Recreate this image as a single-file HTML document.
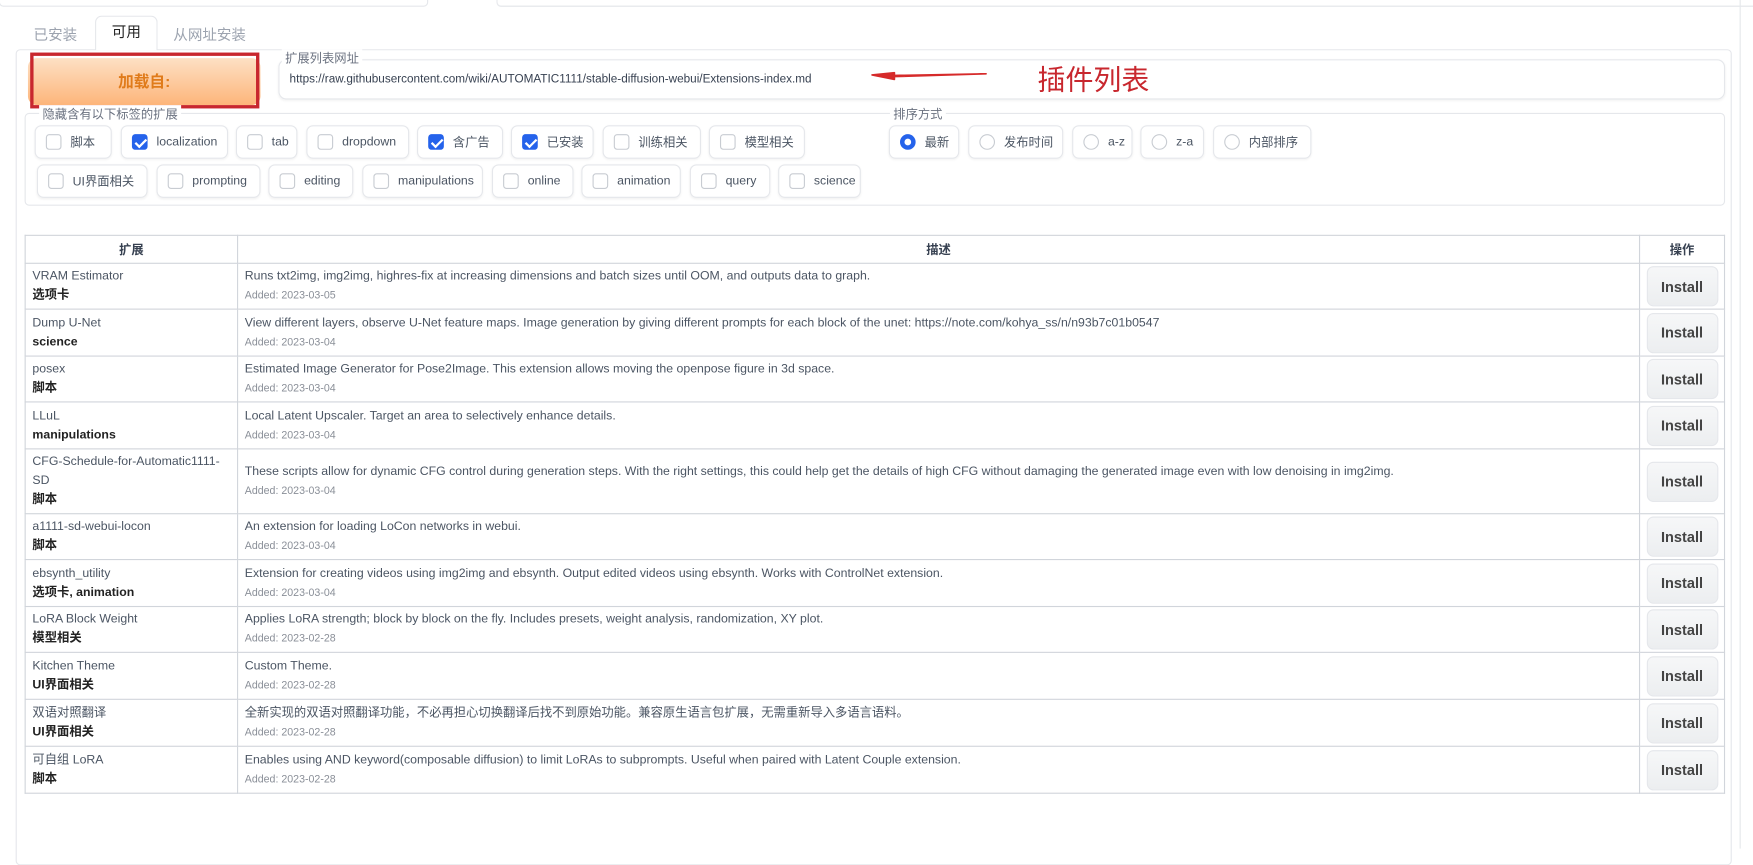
<!DOCTYPE html>
<html><head><meta charset="utf-8"><style>
*{box-sizing:border-box;margin:0;padding:0}
html,body{width:1753px;height:759px;overflow:hidden;background:#fff}
body{font-family:"Liberation Sans","Noto Sans CJK SC",sans-serif;color:#374151}
#w{position:absolute;left:0;top:0;width:1568px;height:679px;transform:scale(1.118);transform-origin:0 0}
.a{position:absolute}
.chip{position:absolute;height:30px;border:1px solid #e5e7eb;border-radius:6px;background:#fff;box-shadow:0 1px 2px rgba(0,0,0,.05);font-size:11px;color:#4b5563;display:flex;align-items:center;padding-left:9px;white-space:nowrap}
.cb{width:14px;height:14px;border:1px solid #c8ccd2;border-radius:3px;margin-right:8px;background:#fff;flex:none}
.cb.on{background:#2563eb;border-color:#2563eb;position:relative}
.cb.on:after{content:"";position:absolute;left:4px;top:1px;width:4px;height:8px;border:solid #fff;border-width:0 2px 2px 0;transform:rotate(45deg)}
.rd{width:14px;height:14px;border:1px solid #c8ccd2;border-radius:50%;margin-right:8px;flex:none}
.rd.on{border:4px solid #2563eb}
table{position:absolute;left:22px;top:210px;width:1521px;border-collapse:collapse;font-size:11px}
td,th{border:1px solid #d1d5db;vertical-align:middle}
th{height:25px;font-weight:bold;font-size:11px;color:#374151}
td{padding:2px 6px;color:#4b5563;line-height:17px}
td b{color:#222;font-weight:bold}
.d{font-size:9.5px;color:#8a8f98}
.btn{width:64px;height:36px;margin:0 auto;border:1px solid #e5e7eb;border-radius:6px;background:linear-gradient(#f6f7f8,#eceef0);font-size:13px;font-weight:bold;color:#444;display:flex;align-items:center;justify-content:center}
td.o{padding:0}
</style></head><body><div id="w">
<div class="a" style="left:-1px;top:-10px;width:384px;height:16px;border:1px solid #e5e7eb;border-radius:4px"></div>
<div class="a" style="left:444px;top:-10px;width:1320px;height:16px;border:1px solid #e5e7eb;border-radius:4px"></div>
<div class="a" style="left:30px;top:21px;font-size:13px;color:#9ca3af">已安装</div>
<div class="a" style="left:85px;top:14px;width:56px;height:31px;border:1px solid #e5e7eb;border-bottom:none;border-radius:6px 6px 0 0;background:#fff;z-index:2;font-size:13px;color:#222;text-align:center;line-height:28px">可用</div>
<div class="a" style="left:155px;top:21px;font-size:13px;color:#9ca3af">从网址安装</div>
<div class="a" style="left:14px;top:44px;width:1535px;height:730px;border:1px solid #e5e7eb;border-radius:4px"></div>
<div class="a" style="left:1556px;top:0;width:1px;height:759px;background:#e5e7eb"></div>
<div class="a" style="left:25px;top:52px;width:208px;height:42px;border-radius:8px;background:linear-gradient(#fde0c4,#fdb57a);font-size:14px;font-weight:bold;color:#e07b1a;text-align:center;line-height:42px">加载自:</div>
<div class="a" style="left:27px;top:47px;width:205px;height:50px;border:3px solid #c8272e"></div>
<div class="a" style="left:249px;top:53px;width:1294px;height:36px;border:1px solid #e5e7eb;border-radius:7px;box-shadow:0 1px 2px rgba(0,0,0,.05);font-size:10.5px;color:#374151;padding:11px 9px">https://raw.githubusercontent.com/wiki/AUTOMATIC1111/stable-diffusion-webui/Extensions-index.md</div>
<div class="a" style="left:252px;top:44px;background:#fff;padding:0 3px;font-size:11px;color:#6b7280">扩展列表网址</div>
<svg class="a" style="left:778px;top:58px" width="106" height="18"><path d="M104 8 L22 9.5 L22 7 L2 9 L22 13 L22 10.5 Z" fill="#d62a2a" stroke="#d62a2a" stroke-width="1.5" stroke-linejoin="round"/></svg>
<div class="a" style="left:928px;top:52px;font-size:25px;color:#c8272e;font-family:'Noto Sans CJK SC',sans-serif">插件列表</div>
<div class="a" style="left:22px;top:101px;width:1521px;height:83px;border:1px solid #e5e7eb;border-radius:4px"></div>
<div class="a" style="left:35px;top:94px;background:#fff;padding:0 3px;font-size:11px;color:#6b7280">隐藏含有以下标签的扩展</div>
<div class="a" style="left:796px;top:94px;background:#fff;padding:0 3px;font-size:11px;color:#6b7280">排序方式</div>
<div class="chip" style="left:31px;top:112px;width:69px"><span class="cb"></span>脚本</div>
<div class="chip" style="left:108px;top:112px;width:96px"><span class="cb on"></span>localization</div>
<div class="chip" style="left:211px;top:112px;width:55px"><span class="cb"></span>tab</div>
<div class="chip" style="left:274px;top:112px;width:92px"><span class="cb"></span>dropdown</div>
<div class="chip" style="left:373px;top:112px;width:77px"><span class="cb on"></span>含广告</div>
<div class="chip" style="left:457px;top:112px;width:74px"><span class="cb on"></span>已安装</div>
<div class="chip" style="left:539px;top:112px;width:88px"><span class="cb"></span>训练相关</div>
<div class="chip" style="left:634px;top:112px;width:86px"><span class="cb"></span>模型相关</div>
<div class="chip" style="left:33px;top:147px;width:99px"><span class="cb"></span>UI界面相关</div>
<div class="chip" style="left:140px;top:147px;width:93px"><span class="cb"></span>prompting</div>
<div class="chip" style="left:240px;top:147px;width:76px"><span class="cb"></span>editing</div>
<div class="chip" style="left:324px;top:147px;width:108px"><span class="cb"></span>manipulations</div>
<div class="chip" style="left:440px;top:147px;width:73px"><span class="cb"></span>online</div>
<div class="chip" style="left:520px;top:147px;width:89px"><span class="cb"></span>animation</div>
<div class="chip" style="left:617px;top:147px;width:72px"><span class="cb"></span>query</div>
<div class="chip" style="left:696px;top:147px;width:74px"><span class="cb"></span>science</div>
<div class="chip" style="left:795px;top:112px;width:63px"><span class="rd on"></span>最新</div>
<div class="chip" style="left:866px;top:112px;width:85px"><span class="rd"></span>发布时间</div>
<div class="chip" style="left:959px;top:112px;width:54px"><span class="rd"></span>a-z</div>
<div class="chip" style="left:1020px;top:112px;width:57px"><span class="rd"></span>z-a</div>
<div class="chip" style="left:1085px;top:112px;width:88px"><span class="rd"></span>内部排序</div>
<table>
<colgroup><col style="width:190px"><col style="width:1255px"><col style="width:76px"></colgroup>
<tr><th>扩展</th><th>描述</th><th>操作</th></tr>
<tr style="height:41px"><td>VRAM Estimator<br><b>选项卡</b></td><td>Runs txt2img, img2img, highres-fix at increasing dimensions and batch sizes until OOM, and outputs data to graph.<br><span class="d">Added: 2023-03-05</span></td><td class="o"><div class="btn">Install</div></td></tr>
<tr style="height:42px"><td>Dump U-Net<br><b>science</b></td><td>View different layers, observe U-Net feature maps. Image generation by giving different prompts for each block of the unet: https://note.com/kohya_ss/n/n93b7c01b0547<br><span class="d">Added: 2023-03-04</span></td><td class="o"><div class="btn">Install</div></td></tr>
<tr style="height:41px"><td>posex<br><b>脚本</b></td><td>Estimated Image Generator for Pose2Image. This extension allows moving the openpose figure in 3d space.<br><span class="d">Added: 2023-03-04</span></td><td class="o"><div class="btn">Install</div></td></tr>
<tr style="height:42px"><td>LLuL<br><b>manipulations</b></td><td>Local Latent Upscaler. Target an area to selectively enhance details.<br><span class="d">Added: 2023-03-04</span></td><td class="o"><div class="btn">Install</div></td></tr>
<tr style="height:58px"><td>CFG-Schedule-for-Automatic1111-SD<br><b>脚本</b></td><td>These scripts allow for dynamic CFG control during generation steps. With the right settings, this could help get the details of high CFG without damaging the generated image even with low denoising in img2img.<br><span class="d">Added: 2023-03-04</span></td><td class="o"><div class="btn">Install</div></td></tr>
<tr style="height:41px"><td>a1111-sd-webui-locon<br><b>脚本</b></td><td>An extension for loading LoCon networks in webui.<br><span class="d">Added: 2023-03-04</span></td><td class="o"><div class="btn">Install</div></td></tr>
<tr style="height:42px"><td>ebsynth_utility<br><b>选项卡, animation</b></td><td>Extension for creating videos using img2img and ebsynth. Output edited videos using ebsynth. Works with ControlNet extension.<br><span class="d">Added: 2023-03-04</span></td><td class="o"><div class="btn">Install</div></td></tr>
<tr style="height:41px"><td>LoRA Block Weight<br><b>模型相关</b></td><td>Applies LoRA strength; block by block on the fly. Includes presets, weight analysis, randomization, XY plot.<br><span class="d">Added: 2023-02-28</span></td><td class="o"><div class="btn">Install</div></td></tr>
<tr style="height:42px"><td>Kitchen Theme<br><b>UI界面相关</b></td><td>Custom Theme.<br><span class="d">Added: 2023-02-28</span></td><td class="o"><div class="btn">Install</div></td></tr>
<tr style="height:42px"><td>双语对照翻译<br><b>UI界面相关</b></td><td>全新实现的双语对照翻译功能，不必再担心切换翻译后找不到原始功能。兼容原生语言包扩展，无需重新导入多语言语料。<br><span class="d">Added: 2023-02-28</span></td><td class="o"><div class="btn">Install</div></td></tr>
<tr style="height:42px"><td>可自组 LoRA<br><b>脚本</b></td><td>Enables using AND keyword(composable diffusion) to limit LoRAs to subprompts. Useful when paired with Latent Couple extension.<br><span class="d">Added: 2023-02-28</span></td><td class="o"><div class="btn">Install</div></td></tr>
</table>
</div></body></html>
